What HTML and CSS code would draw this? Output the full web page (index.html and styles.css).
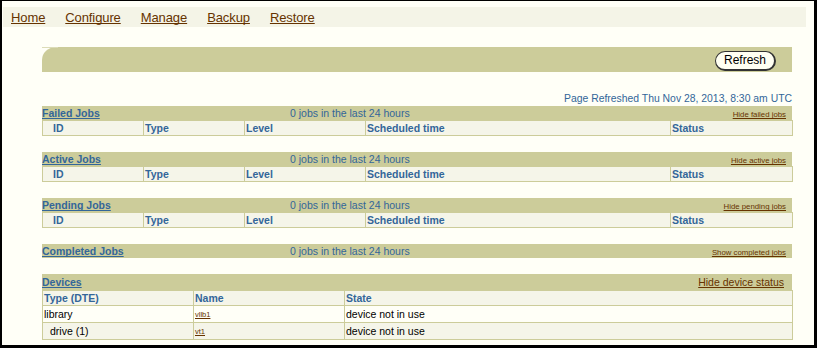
FILE: index.html
```html
<!DOCTYPE html>
<html>
<head>
<meta charset="utf-8">
<link rel="stylesheet" href="styles.css">
</head>
<body>
<nav class="nav">
  <a href="#">Home</a>
  <a href="#">Configure</a>
  <a href="#">Manage</a>
  <a href="#">Backup</a>
  <a href="#">Restore</a>
</nav>
<main class="main">
  <div class="banner"><button class="refresh">Refresh</button></div>
  <div class="refreshed">Page Refreshed Thu Nov 28, 2013, 8:30 am UTC</div>

  <section class="section">
    <div class="bar"><a class="title" href="#">Failed Jobs</a><span class="count">0 jobs in the last 24 hours</span><a class="toggle" href="#">Hide failed jobs</a></div>
    <table class="jobs">
      <colgroup><col class="c1"><col class="c2"><col class="c3"><col class="c4"><col class="c5"></colgroup>
      <tr><th class="first">ID</th><th>Type</th><th>Level</th><th>Scheduled time</th><th>Status</th></tr>
    </table>
  </section>

  <section class="section">
    <div class="bar"><a class="title" href="#">Active Jobs</a><span class="count">0 jobs in the last 24 hours</span><a class="toggle" href="#">Hide active jobs</a></div>
    <table class="jobs">
      <colgroup><col class="c1"><col class="c2"><col class="c3"><col class="c4"><col class="c5"></colgroup>
      <tr><th class="first">ID</th><th>Type</th><th>Level</th><th>Scheduled time</th><th>Status</th></tr>
    </table>
  </section>

  <section class="section">
    <div class="bar"><a class="title" href="#">Pending Jobs</a><span class="count">0 jobs in the last 24 hours</span><a class="toggle" href="#">Hide pending jobs</a></div>
    <table class="jobs">
      <colgroup><col class="c1"><col class="c2"><col class="c3"><col class="c4"><col class="c5"></colgroup>
      <tr><th class="first">ID</th><th>Type</th><th>Level</th><th>Scheduled time</th><th>Status</th></tr>
    </table>
  </section>

  <section class="section">
    <div class="bar"><a class="title" href="#">Completed Jobs</a><span class="count">0 jobs in the last 24 hours</span><a class="toggle" href="#">Show completed jobs</a></div>
  </section>

  <section class="section">
    <div class="bar bar-tall"><a class="title" href="#">Devices</a><span class="count"></span><a class="toggle toggle-big" href="#">Hide device status</a></div>
    <table class="devices">
      <colgroup><col class="d1"><col class="d2"><col class="d3"></colgroup>
      <tr class="head"><th>Type (DTE)</th><th>Name</th><th>State</th></tr>
      <tr class="odd"><td>library</td><td><a class="dev" href="#">vllb1</a></td><td>device not in use</td></tr>
      <tr class="even"><td class="indent">drive (1)</td><td><a class="dev" href="#">vt1</a></td><td>device not in use</td></tr>
    </table>
  </section>
</main>
</body>
</html>
```

FILE: styles.css
```css
html { margin: 0; padding: 0; }
body {
  margin: 0;
  width: 817px;
  height: 348px;
  box-sizing: border-box;
  border-style: solid;
  border-color: #000;
  border-width: 1px 3px 3px 2px;
  background: #fffff7;
  overflow: hidden;
  font-family: "Liberation Sans", Arial, sans-serif;
}
a { text-decoration-skip-ink: none; }
.nav {
  margin: 6px 8px 0 1px;
  height: 20px;
  box-sizing: border-box;
  padding: 3px 0 0 8px;
  background: #f4f4e7;
  display: flex;
  gap: 20px;
  line-height: 16px;
}
.nav a {
  color: #663300;
  font-size: 13px;
  letter-spacing: -0.1px;
}
.main {
  margin: 20px 22px 0 40px;
}
.banner {
  position: relative;
  height: 25px;
  box-sizing: border-box;
  background: #cccc9a;
  border-top-left-radius: 14px 13px;
  display: flex;
  justify-content: flex-end;
  padding: 4px 16px 0 0;
}
.banner::before {
  content: "";
  position: absolute;
  left: 0;
  top: 0;
  width: 16px;
  height: 1px;
  background: #dcdcb8;
}
.refresh {
  width: 61px;
  height: 20px;
  box-sizing: border-box;
  padding: 0 0 1px 0;
  border: 1px solid #333;
  border-right-width: 2px;
  border-bottom-width: 2px;
  border-radius: 10px;
  background: #fffff2;
  color: #000;
  font-family: "Liberation Sans", Arial, sans-serif;
  font-size: 12px;
}
.refreshed {
  margin-top: 20px;
  text-align: right;
  font-size: 10.4px;
  line-height: 13px;
  color: #336699;
}
.section { margin-bottom: 16px; }
.refreshed + .section { margin-top: 1px; }
.bar {
  height: 14px;
  line-height: 14px;
  background: #cccc9a;
  display: grid;
  grid-template-columns: 248px 1fr auto;
  align-items: baseline;
  font-size: 10.5px;
}
.bar-tall { height: 16px; line-height: 16px; }
.title {
  color: #336699;
  font-weight: bold;
}
.count { color: #336699; }
.toggle {
  color: #663300;
  font-size: 7.8px;
  padding-right: 6px;
}
.toggle-big {
  font-size: 10.5px;
  padding-right: 8px;
}
table {
  width: 100%;
  border-collapse: collapse;
  table-layout: fixed;
  font-size: 10.5px;
}
th, td {
  border: 1px solid #cccc9a;
  height: 14px;
  line-height: 14px;
  padding: 0 1px;
  text-align: left;
  white-space: nowrap;
  overflow: hidden;
}
th {
  background: #f5f5e9;
  color: #336699;
  font-weight: bold;
}
th.first { padding-left: 10px; }
.c1 { width: 101px; }
.c2 { width: 101px; }
.c3 { width: 121px; }
.c4 { width: 305px; }
.c5 { width: 122px; }
.d1 { width: 151px; }
.d2 { width: 151px; }
.d3 { width: 448px; }
td { color: #000; }
tr.odd td { background: #fffff7; }
tr.even td { background: #f5f5e9; }
td.indent { padding-left: 7px; }
.dev {
  color: #663300;
  font-size: 7.5px;
}
```
